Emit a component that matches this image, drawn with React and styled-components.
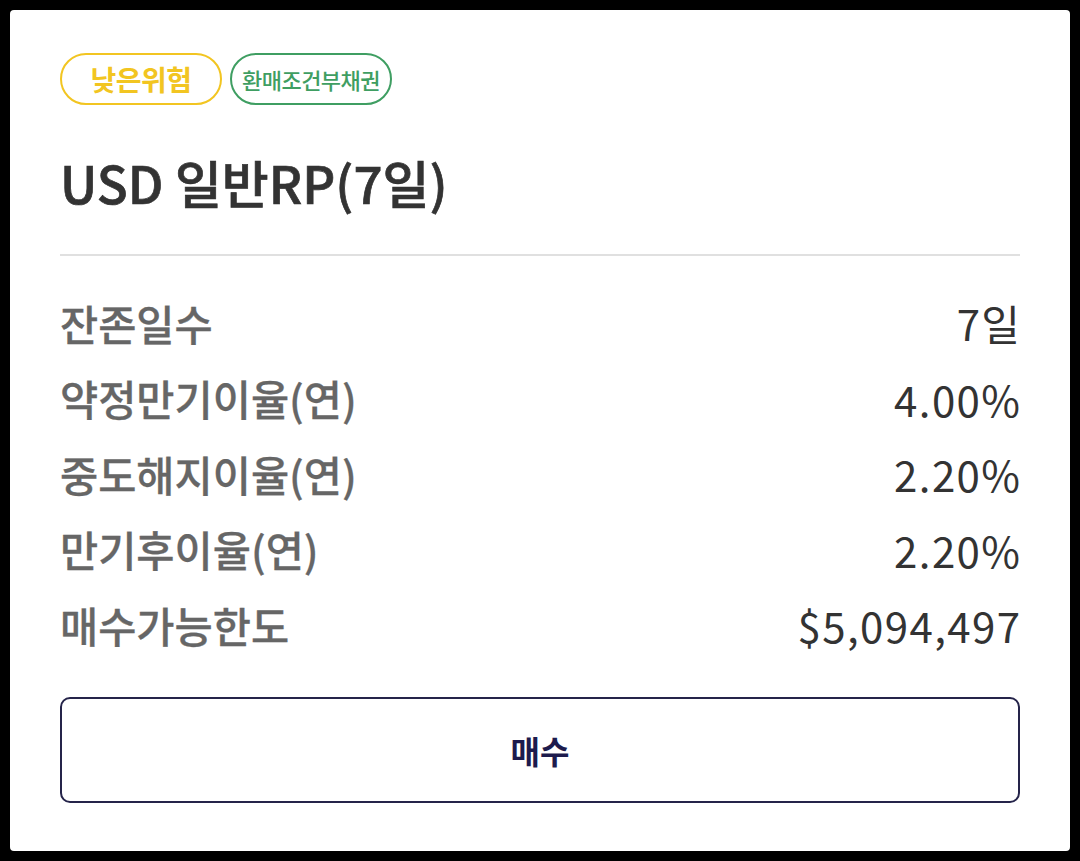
import styled, { createGlobalStyle } from 'styled-components'

const GlobalStyle = createGlobalStyle`
body {
  margin: 0;
  background: #000;
  font-family: "Noto Sans CJK KR", "Noto Sans", sans-serif;
}
`;

const Card = styled.div`
margin: 10px;
height: 841px;
box-sizing: border-box;
background: #fff;
border-radius: 4px;
padding: 43px 50px 0;
display: flex;
flex-direction: column;
`;
const Tags = styled.div`
display: flex;
gap: 8px;
`;
const Tag = styled.span`
width: 162px;
height: 52px;
box-sizing: border-box;
border: 2px solid ${p => p.color};
border-radius: 26px;
color: ${p => p.color};
font-size: ${p => p.size}px;
font-weight: ${p => p.weight};
display: flex;
align-items: center;
justify-content: center;
letter-spacing: -0.5px;
`;
const Title = styled.h1`
margin: 47px 0 0;
font-size: 51px;
line-height: 60px;
font-weight: 500;
-webkit-text-stroke: 0.7px #333;
color: #333;
`;
const Divider = styled.hr`
margin: 42px 0 29px;
border: none;
height: 2px;
background: #e0e0e0;
`;
const Row = styled.div`
height: 75.5px;
display: flex;
justify-content: space-between;
align-items: center;
`;
const Label = styled.span`
color: #666;
font-size: 41.5px;
font-weight: 500;
-webkit-text-stroke: 0.3px #666;
`;
const Value = styled.span`
color: #333;
font-size: 42px;
letter-spacing: 1.4px;
margin-right: -1.4px;
`;
const BuyButton = styled.button`
margin-top: 34px;
height: 106px;
background: #fff;
border: 2px solid #25244a;
border-radius: 10px;
font-family: inherit;
font-size: 32px;
font-weight: 700;
color: #1d1b4d;
cursor: pointer;
`;

const rows = [
  ['잔존일수', '7일'],
  ['약정만기이율(연)', '4.00%'],
  ['중도해지이율(연)', '2.20%'],
  ['만기후이율(연)', '2.20%'],
  ['매수가능한도', '$5,094,497'],
];

const App = () => {
  return (
    <>
      <GlobalStyle />
      <Card>
        <Tags>
          <Tag color="#f2c521" size={28} weight={700}>낮은위험</Tag>
          <Tag color="#3f9e62" size={22} weight={500}>환매조건부채권</Tag>
        </Tags>
        <Title>USD 일반RP(7일)</Title>
        <Divider />
        {rows.map(([label, value]) => (
          <Row key={label}>
            <Label>{label}</Label>
            <Value>{value}</Value>
          </Row>
        ))}
        <BuyButton>매수</BuyButton>
      </Card>
    </>
  )
}

export default App
